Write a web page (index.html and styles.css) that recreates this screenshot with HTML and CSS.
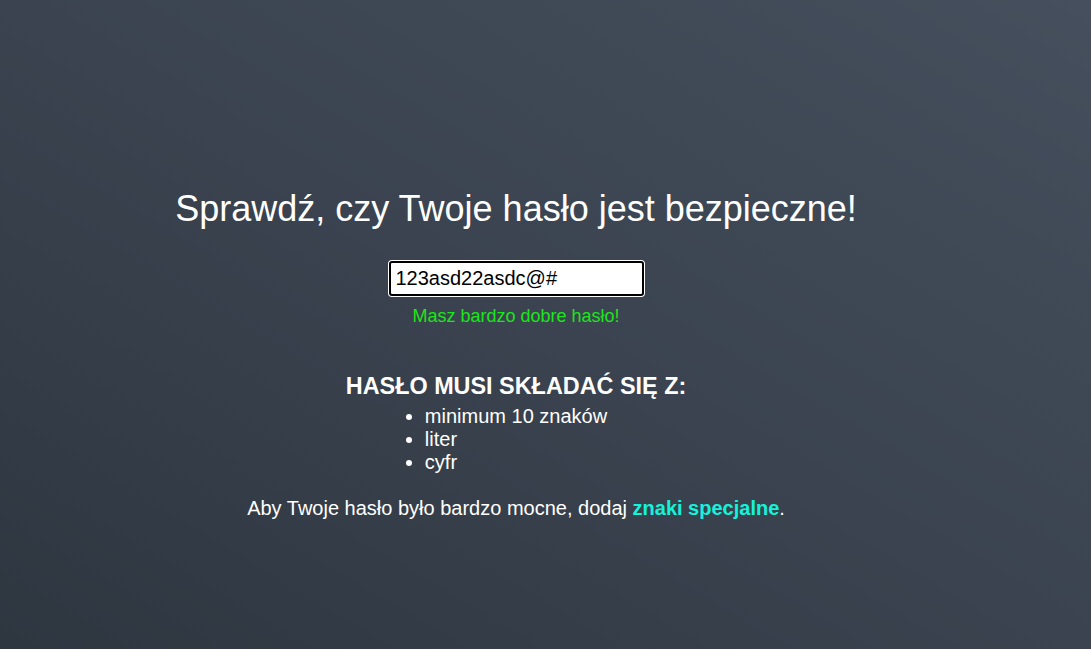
FILE: index.html
```html
<!DOCTYPE html>
<html lang="pl">
<head>
<meta charset="utf-8">
<title>Sprawdź hasło</title>
<link rel="stylesheet" href="styles.css">
</head>
<body>
<main class="page">
  <h1 class="title">Sprawdź, czy Twoje hasło jest bezpieczne!</h1>
  <div class="field-row">
    <input class="password" type="text" value="123asd22asdc@#">
  </div>
  <p class="message">Masz bardzo dobre hasło!</p>
  <h2 class="rules-title">HASŁO MUSI SKŁADAĆ SIĘ Z:</h2>
  <ul class="rules">
    <li>minimum 10 znaków</li>
    <li>liter</li>
    <li>cyfr</li>
  </ul>
  <p class="tip">Aby Twoje hasło było bardzo mocne, dodaj <strong class="accent">znaki specjalne</strong>.</p>
</main>
</body>
</html>
```

FILE: styles.css
```css
html, body {
  margin: 0;
  height: 100%;
}
body {
  background: linear-gradient(to top right, #2e3640 0%, #3a434f 50%, #454f5d 100%);
  font-family: "Liberation Sans", Arial, sans-serif;
  color: #ffffff;
  overflow: hidden;
}
.page {
  width: 1032px;
  padding-top: 188px;
  text-align: center;
}
.title {
  margin: 0;
  font-size: 36px;
  line-height: 41px;
  font-weight: normal;
}
.field-row {
  margin-top: 31px;
  height: 37px;
  display: flex;
  justify-content: center;
  align-items: center;
}
.password {
  box-sizing: border-box;
  width: 255px;
  height: 35px;
  border: 2px solid #000;
  border-radius: 3px;
  box-shadow: 0 0 0 1px #ffffff;
  background: #fff;
  color: #000;
  font-family: "Liberation Sans", Arial, sans-serif;
  font-size: 20px;
  padding: 0 5px;
  outline: none;
}
.message {
  margin: 9px 0 0;
  font-size: 18px;
  line-height: 21px;
  color: #1ae61a;
}
.rules-title {
  margin: 46px 0 0;
  font-size: 23.4px;
  line-height: 27px;
  font-weight: bold;
}
.rules {
  display: inline-block;
  margin: 5px 0 0;
  padding: 0;
  text-align: left;
  font-size: 20px;
  line-height: 23px;
}
.tip {
  margin: 23px 0 0;
  font-size: 20px;
  line-height: 23px;
}
.accent {
  color: #14f2dc;
}
```
